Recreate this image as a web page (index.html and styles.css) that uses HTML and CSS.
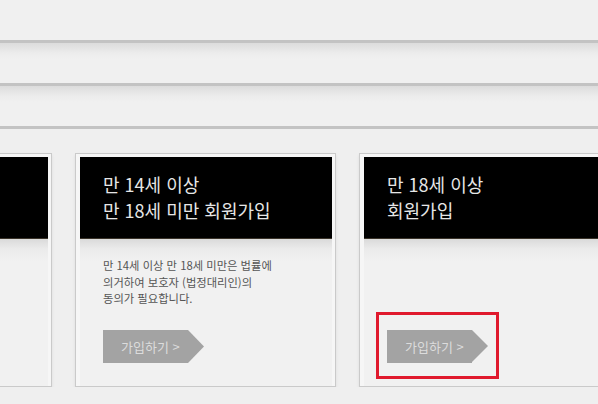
FILE: index.html
```
<!DOCTYPE html>
<html lang="ko">
<head>
    <meta charset="UTF-8">
    <meta name="viewport" content="width=device-width, initial-scale=1.0">
    <title>회원가입</title>
    <link rel="stylesheet" href="styles.css">
</head>
<body>

    <div class="band"></div>
    <div class="band shade"></div>
    <div class="band shade"></div>

    <div class="join-list">
        <!-- only the right edge of this card is in view -->
        <div class="join-card">
            <div class="join-head"></div>
            <div class="join-body"></div>
        </div>

        <div class="join-card">
            <div class="join-head">
                <p>만 14세 이상<br>만 18세 미만 회원가입</p>
            </div>
            <div class="join-body">
                <p class="join-desc">만 14세 이상 만 18세 미만은 법률에<br>의거하여 보호자 (법정대리인)의<br>동의가 필요합니다.</p>
                <span class="join-btn">가입하기 &gt;</span>
            </div>
        </div>

        <div class="join-card">
            <div class="join-head">
                <p>만 18세 이상<br>회원가입</p>
            </div>
            <div class="join-body">
                <span class="join-btn marked">가입하기 &gt;</span>
            </div>
        </div>
    </div>

</body>
</html>
```

FILE: styles.css
```
body {
    margin: 0;
    background: #efefef;
    font-family: "Noto Sans CJK KR", "Noto Sans", sans-serif;
    overflow: hidden;
}

.band {
    height: 40px;
    border-bottom: 3px solid #c3c3c3;
    background: #f0f0f0;
}

.band.shade {
    background: linear-gradient(to bottom, #dcdcdc 0, #ececec 10px, #f0f0f0 16px);
}

.join-list {
    display: flex;
    gap: 23px;
    margin: 24px 0 0 -209px;
}

.join-card {
    flex: 0 0 261px;
    height: 234px;
    box-sizing: border-box;
    border: 1px solid #cacaca;
    padding: 3px 3px 0 4px;
    background: #f6f6f6;
    display: flex;
    flex-direction: column;
    box-shadow: 0 2px 3px rgba(0, 0, 0, 0.08);
}

.join-head {
    height: 82px;
    flex-shrink: 0;
    box-sizing: border-box;
    background: #000;
    border-bottom: 1px solid #3a3329;
    padding: 14px 0 0 23px;
}

.join-head p {
    margin: 0;
    color: #e6e6e6;
    font-size: 18px;
    line-height: 26px;
}

.join-body {
    flex: 1;
    display: flex;
    flex-direction: column;
    align-items: flex-start;
    padding: 18px 0 23px 23px;
    background: linear-gradient(to bottom, #dadada 0, #ebebeb 10px, #f1f1f1 22px);
}

.join-desc {
    margin: 0;
    color: #555;
    font-size: 11.3px;
    line-height: 16.5px;
}

.join-btn {
    position: relative;
    margin-top: auto;
    width: 101px;
    height: 33px;
    box-sizing: border-box;
    padding-left: 18px;
    background: #a3a3a3;
    color: #dcdcdc;
    font-size: 13px;
    line-height: 33px;
    clip-path: polygon(0 0, 85px 0, 101px 50%, 85px 100%, 0 100%);
}

.join-btn.marked {
    clip-path: none;
    background: linear-gradient(to right, #a3a3a3 85px, transparent 85px);
}

.join-btn.marked::before {
    content: "";
    position: absolute;
    left: 85px;
    top: 0;
    border-left: 16px solid #a3a3a3;
    border-top: 16.5px solid transparent;
    border-bottom: 16.5px solid transparent;
}

.join-btn.marked::after {
    content: "";
    position: absolute;
    left: -11px;
    top: -18px;
    right: -11px;
    bottom: -16px;
    border: 3px solid #e0192d;
}
```
